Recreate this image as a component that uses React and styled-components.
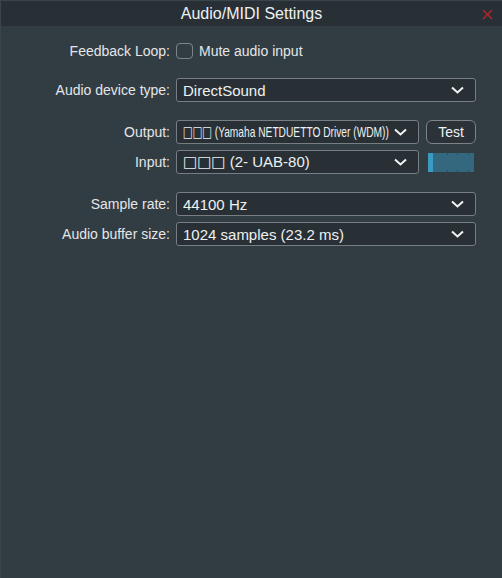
import React from 'react'
import styled, { createGlobalStyle } from 'styled-components'

const Global = createGlobalStyle`
  html, body {
    margin: 0;
    padding: 0;
    background: #323c43;
  }
  body {
    font-family: "Liberation Sans", Arial, sans-serif;
    color: #e8eaeb;
  }
`

const Window = styled.div`
  width: 502px;
  height: 578px;
  display: flex;
  flex-direction: column;
  background: #323c43;
  box-sizing: border-box;
  border-left: 1px solid #3a444b;
  border-top: 1px solid #3a444b;
`

const TitleBar = styled.div`
  height: 25px;
  background: #283036;
  display: flex;
  align-items: center;
  justify-content: center;
  position: relative;
  font-size: 16px;
  color: #eef0f1;
`

const Close = styled.svg`
  position: absolute;
  right: 9px;
  top: 8px;
`

const Body = styled.div`
  display: grid;
  grid-template-columns: 169px minmax(0, 1fr);
  column-gap: 6px;
  align-items: center;
  padding: 13px 26px 0 0;
`

const Label = styled.div`
  text-align: right;
  font-size: 14px;
  color: #e4e6e7;
  margin-top: ${p => p.$gap || 0}px;
`

const Cell = styled.div`
  display: flex;
  align-items: center;
  gap: 7px;
  min-width: 0;
  margin-top: ${p => p.$gap || 0}px;
`

const Check = styled.label`
  display: flex;
  align-items: center;
  gap: 6px;
  height: 24px;
  font-size: 14px;
  color: #e4e6e7;
`

const Box = styled.span`
  width: 15px;
  height: 14px;
  border: 1px solid #7d858a;
  border-radius: 4px;
`

const Combo = styled.div`
  flex: 1;
  min-width: 0;
  height: 24px;
  box-sizing: border-box;
  border: 1px solid #767e83;
  border-radius: 3px;
  background: #283036;
  display: flex;
  align-items: center;
  padding: 0 11px 0 6px;
  font-size: 15px;
  color: #eef0f1;
  overflow: hidden;
  white-space: nowrap;
`

const ComboText = styled.div`
  flex: 1;
  min-width: 0;
  overflow: hidden;
`

const Squash = styled.span`
  display: inline-block;
  transform-origin: left center;
  transform: scaleX(${p => p.$squash || 1});
`

const Tofu = styled.span`
  font-family: "DejaVu Sans", sans-serif;
  font-size: 15px;
`

const Chevron = () => (
  <svg width="13" height="8" viewBox="0 0 13 8">
    <path d="M1 1.5 L6.5 6.5 L12 1.5" fill="none" stroke="#f2f4f5" strokeWidth="2" />
  </svg>
)

const Button = styled.button`
  flex: none;
  width: 50px;
  height: 24px;
  box-sizing: border-box;
  border: 1px solid #7c8489;
  border-radius: 6px;
  background: #2b3339;
  color: #eef0f1;
  font-family: "Liberation Sans", Arial, sans-serif;
  font-size: 14px;
  padding: 0;
`

const Meter = styled.div`
  flex: none;
  width: 46px;
  height: 19px;
  margin: 0 2px;
  background: #33687e;
  position: relative;
  display: flex;
`

const MeterLevel = styled.div`
  width: 5px;
  background: #3a9ac3;
`

const Tick = styled.span`
  position: absolute;
  top: 0;
  bottom: 0;
  width: 1px;
  border-top: 2px solid #2a4f60;
  border-bottom: 2px solid #2a4f60;
  box-sizing: border-box;
`

const Select = ({ children, squash }) => (
  <Combo>
    <ComboText>
      <Squash $squash={squash}>{children}</Squash>
    </ComboText>
    <Chevron />
  </Combo>
)

export default function App() {
  return (
    <>
      <Global />
      <Window>
        <TitleBar>
          Audio/MIDI Settings
          <Close width="11" height="11" viewBox="0 0 11 11">
            <path d="M1 1 L10 10 M10 1 L1 10" stroke="#b8242b" strokeWidth="1.4" />
          </Close>
        </TitleBar>
        <Body>
          <Label>Feedback Loop:</Label>
          <Cell>
            <Check>
              <Box />
              Mute audio input
            </Check>
          </Cell>

          <Label $gap={15}>Audio device type:</Label>
          <Cell $gap={15}>
            <Select>DirectSound</Select>
          </Cell>

          <Label $gap={18}>Output:</Label>
          <Cell $gap={18}>
            <Select squash={0.68}>
              <Tofu>□□□</Tofu> (Yamaha NETDUETTO Driver (WDM))
            </Select>
            <Button>Test</Button>
          </Cell>

          <Label $gap={6}>Input:</Label>
          <Cell $gap={6}>
            <Select>
              <Tofu>□□□</Tofu> (2- UAB-80)
            </Select>
            <Meter>
              <MeterLevel />
              <Tick style={{ left: 19 }} />
              <Tick style={{ left: 29 }} />
              <Tick style={{ left: 40 }} />
            </Meter>
          </Cell>

          <Label $gap={18}>Sample rate:</Label>
          <Cell $gap={18}>
            <Select>44100 Hz</Select>
          </Cell>

          <Label $gap={6}>Audio buffer size:</Label>
          <Cell $gap={6}>
            <Select>1024 samples (23.2 ms)</Select>
          </Cell>
        </Body>
      </Window>
    </>
  )
}
